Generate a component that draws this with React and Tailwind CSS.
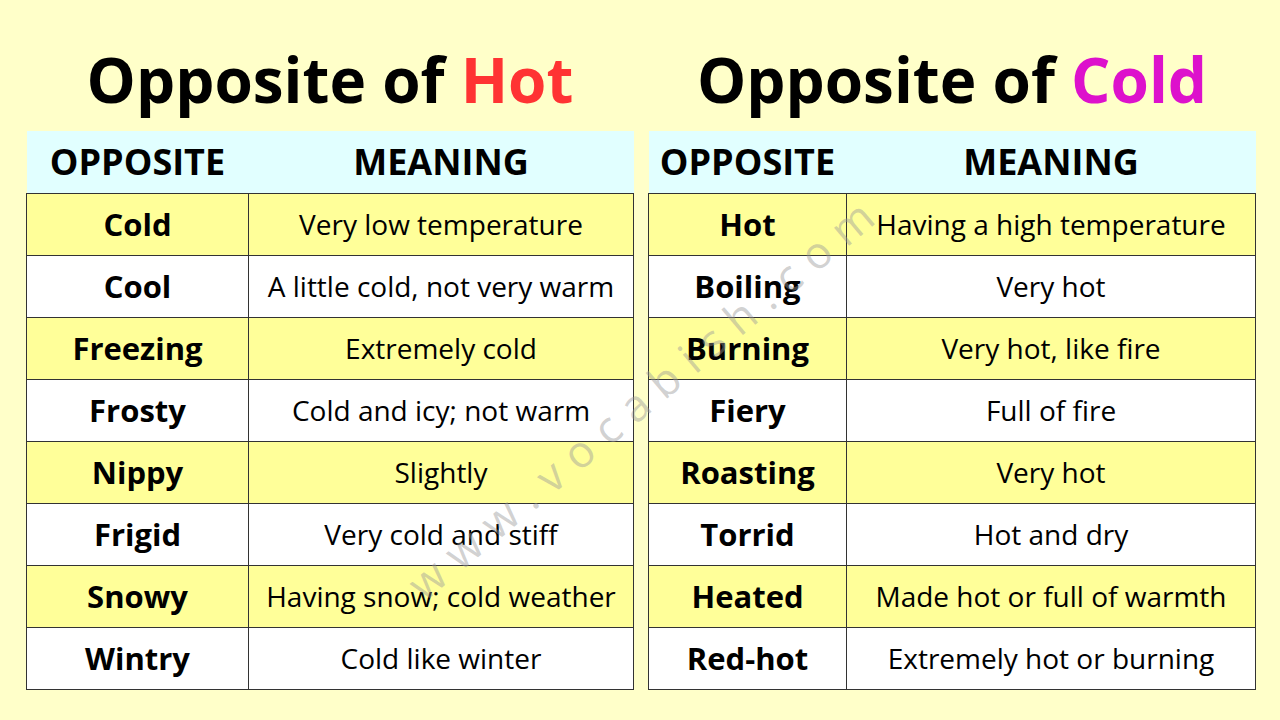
import React from "react";

const hotRows = [
  ["Cold", "Very low temperature"],
  ["Cool", "A little cold, not very warm"],
  ["Freezing", "Extremely cold"],
  ["Frosty", "Cold and icy; not warm"],
  ["Nippy", "Slightly"],
  ["Frigid", "Very cold and stiff"],
  ["Snowy", "Having snow; cold weather"],
  ["Wintry", "Cold like winter"],
];

const coldRows = [
  ["Hot", "Having a high temperature"],
  ["Boiling", "Very hot"],
  ["Burning", "Very hot, like fire"],
  ["Fiery", "Full of fire"],
  ["Roasting", "Very hot"],
  ["Torrid", "Hot and dry"],
  ["Heated", "Made hot or full of warmth"],
  ["Red-hot", "Extremely hot or burning"],
];

function WordTable({ word, color, rows, firstCol }) {
  return (
    <div className="flex w-[608px] flex-col">
      <h1 className="pt-[47px] pb-[19px] text-center text-[62px] font-bold leading-[65px] text-black">
        Opposite of <span className={color}>{word}</span>
      </h1>
      <table className="w-full border-collapse">
        <thead>
          <tr className="h-[62px] bg-[#e1ffff]">
            <th className={`${firstCol} text-[36px] font-bold`}>OPPOSITE</th>
            <th className="text-[36px] font-bold">MEANING</th>
          </tr>
        </thead>
        <tbody>
          {rows.map(([opp, meaning], i) => (
            <tr
              key={opp}
              className={`h-[62px] ${i % 2 === 0 ? "bg-[#ffff99]" : "bg-white"}`}
            >
              <td className="border border-[#333] text-center text-[31px] font-bold">
                {opp}
              </td>
              <td className="border border-[#333] text-center text-[28px]">
                {meaning}
              </td>
            </tr>
          ))}
        </tbody>
      </table>
    </div>
  );
}

export default function App() {
  return (
    <div
      className="relative h-[720px] w-[1280px] overflow-hidden bg-[#ffffc9] text-black"
      style={{ fontFamily: '"Open Sans", sans-serif' }}
    >
      <div className="flex gap-[14px] pl-[26px]">
        <WordTable word="Hot" color="text-[#ff3333]" rows={hotRows} firstCol="w-[222px]" />
        <WordTable word="Cold" color="text-[#dd11cc]" rows={coldRows} firstCol="w-[198px]" />
      </div>

      {/* watermark */}
      <div className="pointer-events-none absolute left-[335px] top-[365px] w-[620px] -rotate-[40deg] text-center text-[44px] leading-[60px] tracking-[0.3em] text-[#999]/45">
        www.vocabish.com
      </div>
    </div>
  );
}
